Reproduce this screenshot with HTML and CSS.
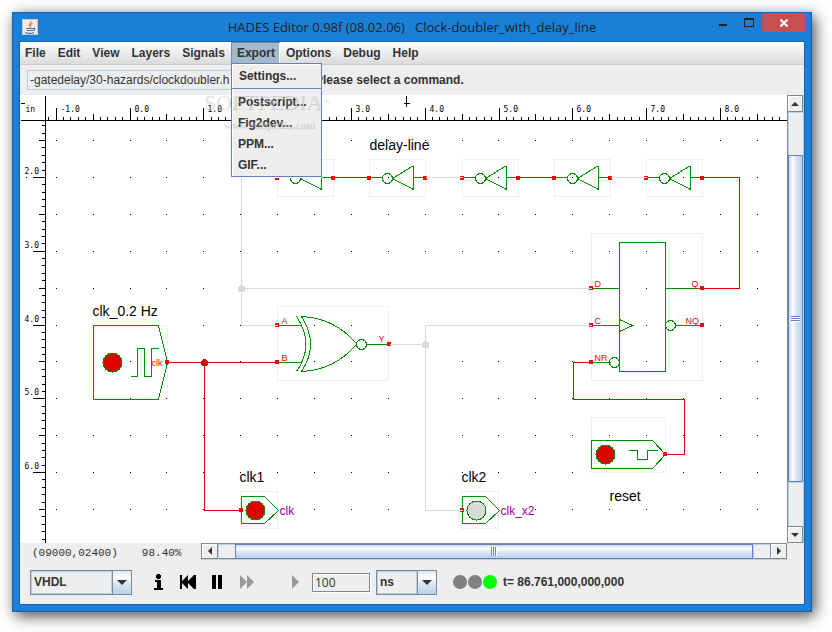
FILE: index.html
```html
<!DOCTYPE html>
<html lang="en">
<head>
<meta charset="utf-8">
<title>HADES Editor</title>
<link rel="stylesheet" href="styles.css">
</head>
<body>
<div class="window">
  <header class="titlebar">
    <svg class="app-icon" width="16" height="16" viewBox="0 0 16 16" aria-hidden="true">
      <rect width="16" height="16" rx="1" fill="#f0eeec"/>
      <rect x="0.5" y="0.5" width="15" height="15" rx="1" fill="none" stroke="#c9c5c2"/>
      <path d="M9 2C10 4 6 5 7 8M10.500 4.500C8 5.500 8 6.500 9 8.500" fill="none" stroke="#e8821e" stroke-width="1.200"/>
      <path d="M4 9.500h7M4.500 11.500h6M3 13.500c3 1 7 1 9 0M11 9.500c3-1 2 2-.5 2" fill="none" stroke="#4a7396" stroke-width="1.200"/>
    </svg>
    <h1 class="title">HADES Editor 0.98f (08.02.06)   Clock-doubler_with_delay_line</h1>
    <div class="window-buttons">
      <button class="win-btn" aria-label="Minimize"><svg width="10" height="9"><rect x="1" y="6" width="8" height="2" fill="#222"/></svg></button>
      <button class="win-btn" aria-label="Maximize"><svg width="10" height="9"><path d="M0 0h10v9H0zM1 2v6h8V2z" fill="#222" fill-rule="evenodd"/></svg></button>
      <button class="win-btn close" aria-label="Close"><svg width="8" height="8"><path d="M0.500 0.500L7.500 7.500M7.500 0.500L0.500 7.500" stroke="#fff" stroke-width="2"/></svg></button>
    </div>
  </header>

  <div class="client">
    <nav class="menubar">
      <button class="menu">File</button>
      <button class="menu">Edit</button>
      <button class="menu">View</button>
      <button class="menu">Layers</button>
      <button class="menu">Signals</button>
      <div class="menu-holder">
        <button class="menu open">Export</button>
        <div class="popup">
          <button class="item first">Settings...</button>
          <button class="item">Postscript...</button>
          <button class="item">Fig2dev...</button>
          <button class="item">PPM...</button>
          <button class="item">GIF...</button>
        </div>
      </div>
      <button class="menu">Options</button>
      <button class="menu">Debug</button>
      <button class="menu">Help</button>
    </nav>

    <div class="toolbar">
      <input class="path" aria-label="Design file" value="-gatedelay/30-hazards/clockdoubler.h">
      <span class="message">Please select a command.</span>
    </div>

    <main class="workspace">
      <svg class="canvas" shape-rendering="crispEdges" aria-label="Schematic">
        <defs>
          <rect id="pin" x="-2.500" y="-1.500" width="4" height="4" fill="#f00"/>
          <g id="inverter">
            <rect class="bounds" width="56" height="37" y="-18"/>
            <path d="M0 0H13M44 0H56M44 -12V12L23 1L44 -12"/>
            <circle cx="18" cy="1" r="5"/>
            <use href="#pin"/>
            <use href="#pin" x="56"/>
          </g>
          <g id="probe">
            <rect class="bounds" x="-1" y="-19" width="37" height="37"/>
            <path d="M0 -14H23L37 0L23 13H0Z"/>
            <use href="#pin" y="-1"/>
          </g>
        </defs>
        <g transform="translate(-19.500 -94.500)">
          <g id="grid" class="ink"></g>
          <path class="ruler" d="M20 120H786M45 95V542M20 103H24M406 95V106M403 103H409M25 177H26"/>
          <g id="rulers" class="ruler"></g>
          <text class="tick" x="25" y="111">in</text>

          <g class="part">
            <use href="#inverter" x="277" y="177"/>
            <use href="#inverter" x="369" y="177"/>
            <use href="#inverter" x="462" y="177"/>
            <use href="#inverter" x="554" y="177"/>
            <use href="#inverter" x="646" y="177"/>

            <rect class="bounds" x="93" y="325" width="74" height="74"/>
            <path d="M93 325H158L167 362L158 399H93ZM130 376H137V348H144V376H151V348H158"/>
            <circle class="on" cx="112" cy="362" r="9.500"/>

            <rect class="bounds" x="277" y="306" width="111" height="74"/>
            <path d="M277 325H301M277 362H301M366 344H388M296 316Q315 344 296 371M301 316Q319 344 301 371M301 316C325 317 343 328 356 343M301 371C325 370 343 359 356 344"/>
            <circle cx="361" cy="344" r="5"/>

            <rect class="bounds" x="591" y="233" width="111" height="147"/>
            <path d="M619 242H665V371H619ZM591 288H619M665 288H702M591 325H619M619 319L632 325L619 331M675 325H702M591 362H610"/>
            <circle cx="670" cy="325" r="5"/>
            <circle cx="614" cy="362" r="5"/>

            <rect class="bounds" x="591" y="417" width="74" height="55"/>
            <path d="M591 440H652L665 454L652 468H591ZM628 450H637V459H647V450H657"/>
            <circle class="on" cx="605" cy="454" r="9.500"/>

            <use href="#probe" x="241" y="510"/>
            <circle class="on" cx="255" cy="510" r="9.500"/>
            <use href="#probe" x="462" y="510"/>
            <circle class="off" cx="476" cy="510" r="9.500"/>
          </g>

          <use href="#pin" x="167" y="361"/>
          <use href="#pin" x="277" y="324"/><use href="#pin" x="277" y="361"/><use href="#pin" x="389" y="343"/>
          <use href="#pin" x="591" y="287"/><use href="#pin" x="591" y="324"/><use href="#pin" x="591" y="361"/>
          <use href="#pin" x="702" y="287"/><use href="#pin" x="702" y="324"/><use href="#pin" x="665" y="453"/>

          <path class="wire idle" d="M277 177H241V325H277M241 288H591M425 177H462M610 177H646M389 344H425M591 325H425V510H462"/>
          <path class="wire high" d="M167 362H277M204 362V510H241M333 177H369M518 177H554M702 177H739V288H702M665 454H684V399H573V362H591"/>
          <circle cx="241" cy="288" r="3.500" fill="#dadada"/>
          <circle cx="425" cy="344" r="3.500" fill="#dadada"/>
          <circle cx="204" cy="362" r="3.500" fill="#e00000"/>

          <g class="name">
            <text x="92" y="315">clk_0.2 Hz</text>
            <text x="369" y="149">delay-line</text>
            <text x="239" y="481">clk1</text>
            <text x="461" y="481">clk2</text>
            <text x="609" y="500">reset</text>
          </g>
          <g class="pin-name">
            <text x="151" y="365">clk</text>
            <text x="281" y="323">A</text><text x="281" y="360">B</text><text x="378" y="341">Y</text>
            <text x="594" y="286">D</text><text x="594" y="323">C</text><text x="594" y="360">NR</text>
            <text x="691" y="286">Q</text><text x="685" y="323">NQ</text>
          </g>
          <g class="net-name">
            <text x="279" y="514">clk</text>
            <text x="500" y="514">clk_x2</text>
          </g>
        </g>
      </svg>
      <div class="scroll vertical">
        <button class="arrow" aria-label="Scroll up"><svg width="8" height="4"><path d="M0 4L4 0L8 4Z" fill="#333"/></svg></button>
        <div class="gap-before"></div>
        <div class="thumb"><span class="grip"></span></div>
        <div class="gap-after"></div>
        <button class="arrow" aria-label="Scroll down"><svg width="8" height="4"><path d="M0 0L4 4L8 0Z" fill="#333"/></svg></button>
      </div>
    </main>

    <div class="status">
      <div class="readout"><span>(09000,02400)</span><span>98.40%</span></div>
      <div class="scroll horizontal">
        <button class="arrow" aria-label="Scroll left"><svg width="4" height="8"><path d="M4 0L0 4L4 8Z" fill="#333"/></svg></button>
        <div class="gap-before"></div>
        <div class="thumb"><span class="grip"></span></div>
        <div class="gap-after"></div>
        <button class="arrow" aria-label="Scroll right"><svg width="4" height="8"><path d="M0 0L4 4L0 8Z" fill="#333"/></svg></button>
      </div>
    </div>

    <footer class="controls">
      <div class="combo language">
        <select aria-label="Language"><option>VHDL</option></select>
        <span class="drop"><svg width="10" height="5"><path d="M0 0H10L5 5Z" fill="#333"/></svg></span>
      </div>
      <div class="transport">
        <button aria-label="Information"><svg width="10" height="16" shape-rendering="crispEdges"><path d="M3 0h3v1h1v3H6v1H3V4H2V1h1zM1 6h6v8h2v2H0v-2h3V8H1z"/></svg></button>
        <button aria-label="Rewind"><svg width="16" height="14"><path d="M0 0h2v6l6-6v6l6-6h2v14h-2L8 8v6L2 8v6H0z"/></svg></button>
        <button aria-label="Pause"><svg width="10" height="14"><path d="M0 0h4v14H0zM6 0h4v14H6z"/></svg></button>
        <button class="run" aria-label="Run" disabled><svg width="15" height="14"><path d="M0 0l7 7l-7 7zM7 0l7 7l-7 7z" fill="#999"/></svg></button>
        <button class="step" aria-label="Step" disabled><svg width="8" height="14"><path d="M0 0l7 7l-7 7z" fill="#999"/></svg></button>
      </div>
      <input class="amount" aria-label="Step time" value="100">
      <div class="combo unit">
        <select aria-label="Time unit"><option>ns</option></select>
        <span class="drop"><svg width="10" height="5"><path d="M0 0H10L5 5Z" fill="#333"/></svg></span>
      </div>
      <div class="lights"><span class="light"></span><span class="light"></span><span class="light go"></span></div>
      <output class="time">t= 86.761,000,000,000</output>
    </footer>
  </div>
  <div class="watermark" aria-hidden="true">
    <div class="mark">SOFTPEDIA<span class="tm">™</span></div>
    <div class="site">www.softpedia.com</div>
  </div>
</div>
<script src="ruler.js"></script>
</body>
</html>
```
FILE: ruler.js
```javascript
// Draws the ruler ticks, their labels and the grid points of the schematic.
const NS = "http://www.w3.org/2000/svg";
const INCH = 73.8;
const X0 = 56.2;
const Y0 = 103.6;
const rulers = document.getElementById("rulers");
const grid = document.getElementById("grid");

function addPath(parent, d) {
  const path = document.createElementNS(NS, "path");
  path.setAttribute("d", d);
  parent.appendChild(path);
}

function addLabel(x, y, value) {
  const text = document.createElementNS(NS, "text");
  text.setAttribute("class", "tick");
  text.setAttribute("x", x);
  text.setAttribute("y", y);
  text.textContent = value.toFixed(1);
  rulers.appendChild(text);
}

let ticks = "";
for (let i = -1; i < 99; i++) {
  const x = Math.floor(X0 + i * INCH / 10);
  ticks += `M${x} 120V${i % 10 === 0 ? 107 : i % 5 === 0 ? 113 : 116}`;
  if (i % 10 === 0) addLabel(x + 4, 111, i / 10 - 1);
}
for (let i = 3; i < 60; i++) {
  const y = Math.floor(Y0 + i * INCH / 10);
  ticks += `M45 ${y}H${i % 10 === 0 ? 32 : i % 5 === 0 ? 38 : 41}`;
  if (i % 10 === 0) addLabel(24, y - 4, i / 10 + 1);
}
addPath(rulers, ticks);

let points = "";
for (let r = 1; r < 12; r++) {
  for (let c = 0; c < 20; c++) {
    const x = Math.floor(X0 + c * INCH / 2) - 0.5;
    const y = Math.floor(Y0 + r * INCH / 2) - 0.5;
    points += `M${x} ${y}h1v1h-1z`;
  }
}
addPath(grid, points);
```
FILE: styles.css
```css
* { box-sizing: border-box; }

html, body { height: 100%; }

body {
  margin: 0;
  padding: 12px 20px 20px 12px;
  overflow: hidden;
  background: #fff;
  font: 12px/16px "Liberation Sans", sans-serif;
  color: #333;
}

button {
  margin: 0;
  padding: 0;
  border: 0;
  background: none;
  font: inherit;
  color: inherit;
}

svg { display: block; }

.window {
  position: relative;
  display: flex;
  flex-direction: column;
  height: 100%;
  padding: 0 6px 6px;
  border: 1px solid #1263ac;
  background: #1a80d7;
  box-shadow: 3px 4px 14px rgba(0, 0, 0, 0.7);
}

/* Title bar */
.titlebar {
  display: grid;
  grid-template-columns: 1fr auto 1fr;
  height: 28px;
}
.app-icon { margin: 6px 0 0 3px; }
.title {
  margin: 0;
  font: 13px/28px "Open Sans", sans-serif;
  color: #222;
  white-space: pre;
}
.window-buttons {
  display: flex;
  justify-content: flex-end;
  align-items: flex-start;
}
.win-btn {
  display: flex;
  justify-content: center;
  padding-top: 5px;
  width: 26px;
  height: 19px;
}
.win-btn.close {
  width: 43px;
  padding-top: 6px;
  background: #c75050;
}

.client {
  flex: 1;
  min-height: 0;
  display: flex;
  flex-direction: column;
  border: 1px solid #1263ac;
  background: #eee;
}

/* Menus */
.menubar {
  display: flex;
  height: 23px;
  border-bottom: 1px solid #ccc;
  background: linear-gradient(#fff, #dadada);
  font-weight: bold;
}
.menu {
  height: 22px;
  padding: 0 6px;
}
.menu:first-child { padding-left: 5px; }
.menu.open {
  padding: 0 5px 0 6px;
  background: #a3b8cc;
  box-shadow: inset 1px 1px #7a8a99, inset -1px 0 #fff;
}
.menu-holder { position: relative; }
.menu-holder .menu:first-child { padding-left: 6px; }
.popup {
  position: absolute;
  z-index: 2;
  top: 21px;
  left: 0;
  width: 91px;
  padding-bottom: 1px;
  border: 1px solid #6382bf;
  background: #eee;
  box-shadow: inset 1px 1px #fff, 0 1px #fff;
}
.item {
  display: block;
  width: 100%;
  height: 21px;
  padding-left: 6px;
  text-align: left;
}
.item.first {
  height: 25px;
  margin-bottom: 2px;
  padding-left: 7px;
  border-bottom: 1px solid #6382bf;
}

/* File path and prompt */
.toolbar {
  display: grid;
  grid-template-columns: 284px 1fr;
  gap: 4px;
  align-items: center;
  height: 30px;
  padding-left: 7px;
}
.path {
  height: 20px;
  padding: 0 2px;
  border: 1px solid #b8cfe5;
  background: #eee;
  font: inherit;
  color: #333;
}
.message { font-weight: bold; }

/* Schematic */
.workspace {
  flex: 1;
  min-height: 0;
  display: flex;
  background: #fff;
}
.canvas {
  flex: 1;
  min-width: 0;
  height: 100%;
  overflow: hidden;
}
.part, .wire, .ruler path, path.ruler { fill: none; }
.part { stroke: #009000; }
#pin { stroke: none; }
.bounds { stroke: #efefef; }
.on { fill: #e00000; }
.off { fill: #dadada; }
.idle { stroke: #dadada; }
.high { stroke: #e00000; }
.ruler path, path.ruler { stroke: #000; }
.tick { font: 8px "DejaVu Sans Mono", monospace; fill: #000; }
.name { font-size: 14px; fill: #000; }
.pin-name { font-size: 9px; fill: #f00; }
.net-name { font-size: 12px; fill: #a000a0; }

/* Scroll bars */
.scroll { display: flex; background: #eee; }
.scroll .arrow {
  display: flex;
  align-items: center;
  justify-content: center;
  flex: 0 0 17px;
  border: 1px solid #7a8a99;
  box-shadow: inset 1px 1px #fff;
}
.thumb {
  display: flex;
  align-items: center;
  justify-content: center;
  border: 1px solid #6382bf;
}
.vertical {
  flex-direction: column;
  width: 17px;
  border-left: 1px solid #7a8a99;
  border-right: 1px solid #b8cfe5;
}
.vertical .arrow { border-left: 0; }
.vertical .thumb {
  flex: 327;
  background: linear-gradient(90deg, #c8d8ea, #fff 30%, #dfe9f3 50%, #b8cfe5);
}
.vertical .gap-before { flex: 43; box-shadow: inset 1px 1px #b8cfe5; }
.vertical .gap-after { flex: 44; box-shadow: inset 1px 1px #b8cfe5; }
.vertical .grip {
  width: 9px;
  height: 6px;
  background: repeating-linear-gradient(#6382bf 0 1px, #fff 1px 2px);
}
.horizontal { border-top: 1px solid #7a8a99; border-bottom: 1px solid #b8cfe5; }
.horizontal .arrow { border-top: 0; }
.horizontal .thumb {
  flex: 518;
  background: linear-gradient(#c8d8ea, #fff 30%, #dfe9f3 50%, #b8cfe5);
}
.horizontal .gap-before,
.horizontal .gap-after { flex: 17; box-shadow: inset 1px 1px #b8cfe5, inset 0 -1px #7a8a99; }
.horizontal .grip {
  width: 6px;
  height: 9px;
  background: repeating-linear-gradient(90deg, #6382bf 0 1px, #fff 1px 2px);
}

/* Status line */
.status {
  display: grid;
  grid-template-columns: 181px 1fr;
  height: 17px;
  padding-right: 17px;
}
.readout {
  display: flex;
  gap: 24px;
  padding: 3px 0 0 12px;
  font: 11px/14px "Liberation Mono", monospace;
}

/* Simulation controls */
.controls {
  display: flex;
  align-items: center;
  height: 44px;
  padding-left: 10px;
}
.combo {
  display: flex;
  height: 25px;
  border: 1px solid #7a8a99;
}
.combo select {
  flex: 1;
  min-width: 0;
  padding: 0 2px;
  appearance: none;
  border: 1px solid #b8cfe5;
  border-radius: 0;
  background: #eee;
  font: bold 12px/16px "Liberation Sans", sans-serif;
  color: #333;
}
.drop {
  display: flex;
  align-items: center;
  justify-content: center;
  width: 19px;
  border-left: 1px solid #7a8a99;
  background: linear-gradient(#dde8f3, #fff 30%, #dfe9f3 50%, #b8cfe5);
}
.language { width: 102px; }
.unit { width: 61px; margin-left: 6px; }
.transport {
  display: flex;
  align-items: center;
  gap: 16px;
  margin-left: 22px;
}
.transport .run { margin-left: 2px; }
.transport .step { margin-left: 21px; }
.amount {
  width: 58px;
  height: 19px;
  margin-left: 12px;
  padding: 0 2px;
  border: 1px solid #7a8a99;
  background: #eee;
  box-shadow: inset 1px 1px #fff, 1px 1px #fff;
  font: 12px/16px "Open Sans", sans-serif;
  color: #333;
}
.lights { display: flex; gap: 1px; margin-left: 16px; }
.light {
  width: 14px;
  height: 14px;
  border-radius: 50%;
  background: #808080;
}
.light.go { background: #0f0; }
.time { margin-left: 6px; font-weight: bold; }

/* Watermark laid over the window */
.watermark {
  position: absolute;
  z-index: 3;
  left: 190px;
  top: 77px;
  pointer-events: none;
  color: rgba(255, 255, 255, 0.35);
  text-shadow: 1px 1px 1px rgba(0, 0, 0, 0.16);
  font-family: "Liberation Serif", serif;
  white-space: nowrap;
}
.mark { font-size: 22px; line-height: 24px; }
.tm { font-size: 8px; vertical-align: top; }
.site { padding-left: 20px; font-size: 11px; font-weight: bold; line-height: 20px; }
```
